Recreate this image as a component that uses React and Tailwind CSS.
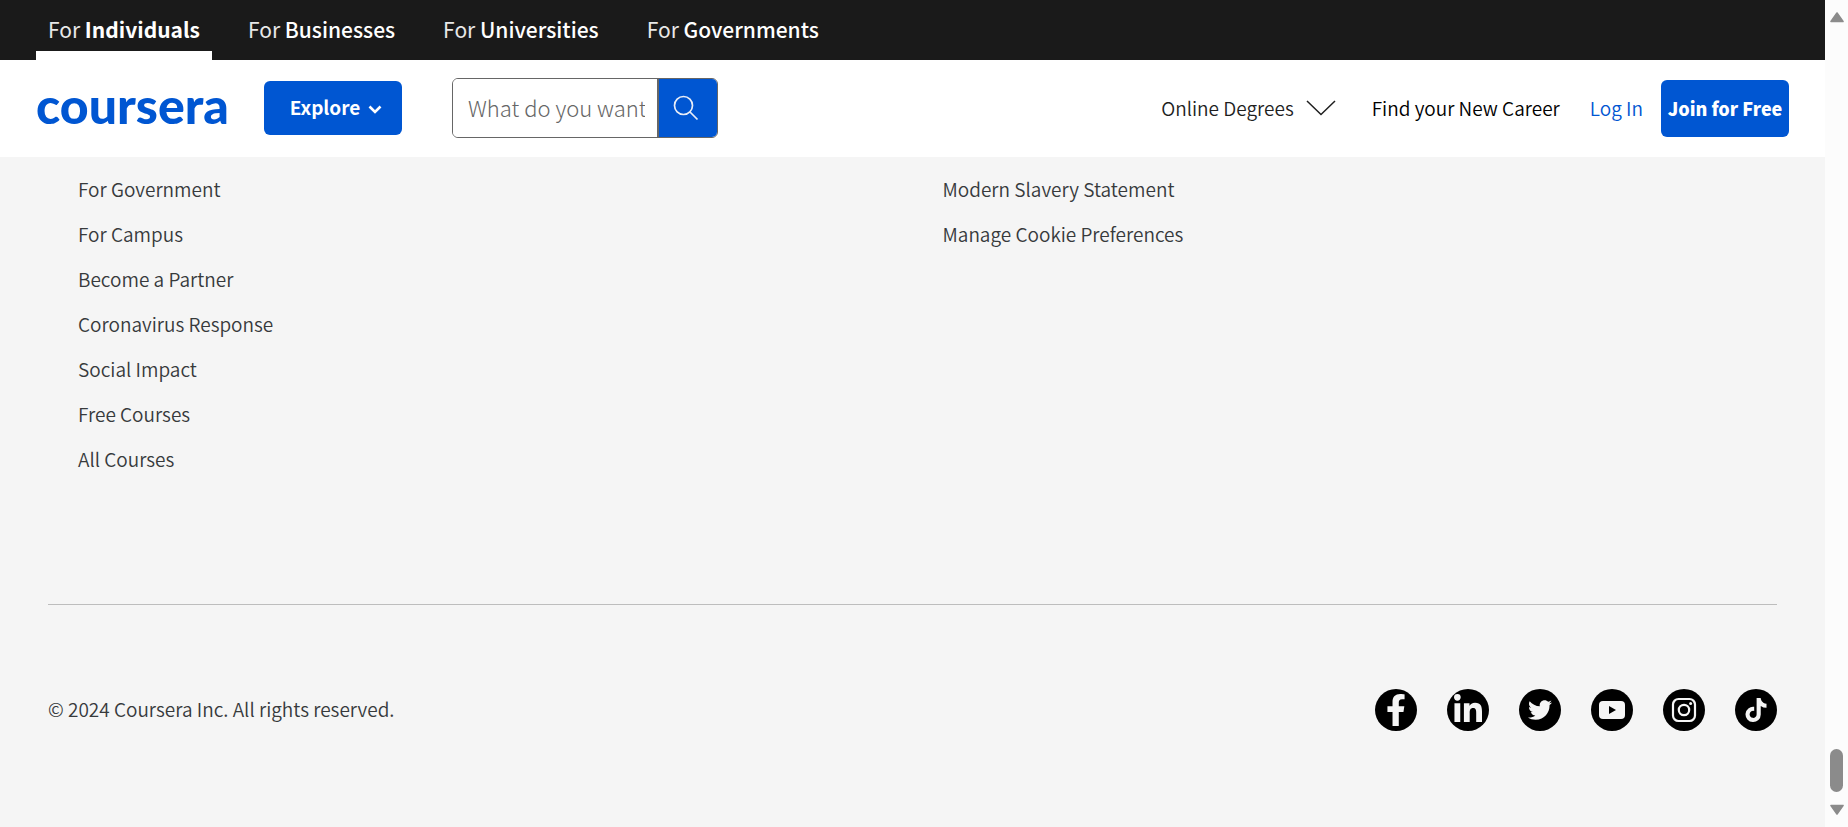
import React from "react";
import { FaFacebookF, FaLinkedinIn, FaTwitter, FaTiktok } from "react-icons/fa";

const audiences = ["Individuals", "Businesses", "Universities", "Governments"];

const communityLinks = [
  "For Government",
  "For Campus",
  "Become a Partner",
  "Coronavirus Response",
  "Social Impact",
  "Free Courses",
  "All Courses",
];

const moreLinks = ["Modern Slavery Statement", "Manage Cookie Preferences"];

function YoutubeGlyph() {
  return (
    <svg viewBox="0 0 42 42" className="size-full" aria-hidden="true">
      <rect x="8" y="12" width="26" height="18" rx="4" fill="currentColor" />
      <path d="M18 17v8l7-4z" fill="#000" />
    </svg>
  );
}

function InstagramGlyph() {
  return (
    <svg viewBox="0 0 42 42" className="size-full" fill="none" stroke="currentColor" strokeWidth="2.2" aria-hidden="true">
      <rect x="10" y="10" width="22" height="22" rx="5.5" />
      <circle cx="21" cy="21" r="5.2" />
      <circle cx="27.6" cy="14.6" r="1.5" fill="currentColor" stroke="none" />
    </svg>
  );
}

const socials = [
  { name: "Facebook", icon: <FaFacebookF className="size-8" /> },
  { name: "LinkedIn", icon: <FaLinkedinIn className="size-8" /> },
  { name: "Twitter", icon: <FaTwitter className="size-6" /> },
  { name: "YouTube", icon: <YoutubeGlyph /> },
  { name: "Instagram", icon: <InstagramGlyph /> },
  { name: "TikTok", icon: <FaTiktok className="size-6" /> },
];

function LinkColumn({ links }) {
  return (
    <ul className="pl-[30px]">
      {links.map((label) => (
        <li key={label} className="h-[45px] leading-[45px]">
          <a href="#">{label}</a>
        </li>
      ))}
    </ul>
  );
}

function Scrollbar() {
  return (
    <div className="flex w-[23px] shrink-0 flex-col items-center bg-[#fcfcfc] text-[#8b8b8b]" aria-hidden="true">
      <svg viewBox="0 0 14 11" className="mt-3 h-[11px] w-[14px]">
        <path d="M7 1 L13 9.5 H1 Z" fill="currentColor" stroke="currentColor" strokeWidth="1.6" strokeLinejoin="round" />
      </svg>
      <div className="mt-auto h-[43px] w-[13px] rounded-full bg-[#8b8b8b]" />
      <svg viewBox="0 0 14 11" className="my-3 h-[11px] w-[14px]">
        <path d="M7 10 L13 1.5 H1 Z" fill="currentColor" stroke="currentColor" strokeWidth="1.6" strokeLinejoin="round" />
      </svg>
    </div>
  );
}

export default function App() {
  return (
    <div className="flex min-h-screen bg-[#f5f5f5] font-['Noto_Sans_CJK_SC','Noto_Sans',sans-serif] text-[19px] font-[350] text-[#373a3c]">
      <div className="flex min-w-0 grow flex-col">
        <nav className="flex h-[60px] gap-6 bg-[#1a1a1a] px-9 text-[21px] font-normal text-white">
          {audiences.map((name, i) => (
            <a key={name} href="#" className="flex flex-col justify-between pt-2">
              <span className="px-3 leading-[42px]">
                <span className="text-[#e8e8e8]">For </span>
                <span className={i === 0 ? "font-bold" : "font-medium"}>{name}</span>
              </span>
              {i === 0 && <span className="h-[9px] bg-white" />}
            </a>
          ))}
        </nav>

        <header className="flex h-[97px] items-center bg-white px-9 pb-px">
          <a href="#" className="w-[191px] pb-1.5 font-['Lato',sans-serif] text-[50px] leading-[54px] font-black text-[#0056d2]">
            coursera
          </a>
          <button type="button" className="ml-[37px] flex h-[54px] w-[138px] items-center justify-center gap-2 rounded-md bg-[#0056d2] pb-px pl-1.5 font-bold text-white">
            Explore
            <svg viewBox="0 0 14 12" className="h-3 w-[14px]" fill="none" stroke="currentColor" strokeWidth="2.6" aria-hidden="true">
              <path d="M1.5 4.5 L7 10 L12.5 4.5" />
            </svg>
          </button>
          <form className="ml-[50px] flex h-[60px] w-[266px] overflow-hidden rounded-md border border-[#666]">
            <input
              type="text"
              aria-label="Search"
              placeholder="What do you want to learn?"
              className="min-w-0 grow bg-white pr-3 pb-0.5 pl-[15px] text-[22px] font-light outline-none placeholder:text-[#666]"
            />
            <button type="submit" aria-label="Submit search" className="flex w-[60px] shrink-0 items-center border-l-2 border-[#666] bg-[#0056d2] pl-[14px] text-[#e8edf7]">
              <svg viewBox="0 0 26 26" className="size-[26px]" fill="none" stroke="currentColor" strokeWidth="1.7" aria-hidden="true">
                <circle cx="10.5" cy="10.5" r="9" />
                <path d="M17 17 L24.5 24.5" />
              </svg>
            </button>
          </form>
          <div className="ml-auto flex items-center whitespace-nowrap">
            <button type="button" className="flex items-center gap-3 text-[#1f1f1f]">
              Online Degrees
              <svg viewBox="0 0 30 16" className="h-4 w-[30px]" fill="none" stroke="currentColor" strokeWidth="1.5" aria-hidden="true">
                <path d="M1 1 L15 14.5 L29 1" />
              </svg>
            </button>
            <a href="#" className="ml-9 text-black">Find your New Career</a>
            <a href="#" className="ml-[30px] text-[#0056d2]">Log In</a>
            <a href="#" className="ml-[18px] flex h-[57px] w-[128px] items-center justify-center rounded-md bg-[#0056d2] text-[18px] font-black text-white">
              Join for Free
            </a>
          </div>
        </header>

        <footer className="px-12 pt-[9px]">
          <div className="grid grid-cols-2 pb-[123px]">
            <LinkColumn links={communityLinks} />
            <LinkColumn links={moreLinks} />
          </div>
          <div className="flex items-center justify-between border-t border-[#bdbdbd] pt-[84px] pb-24">
            <p className="pb-0.5 leading-6">© 2024 Coursera Inc. All rights reserved.</p>
            <ul className="flex gap-[30px]">
              {socials.map(({ name, icon }) => (
                <li key={name}>
                  <a href="#" aria-label={name} className="flex size-[42px] items-center justify-center rounded-full bg-black text-[#f5f5f5]">
                    {icon}
                  </a>
                </li>
              ))}
            </ul>
          </div>
        </footer>
      </div>
      <Scrollbar />
    </div>
  );
}
